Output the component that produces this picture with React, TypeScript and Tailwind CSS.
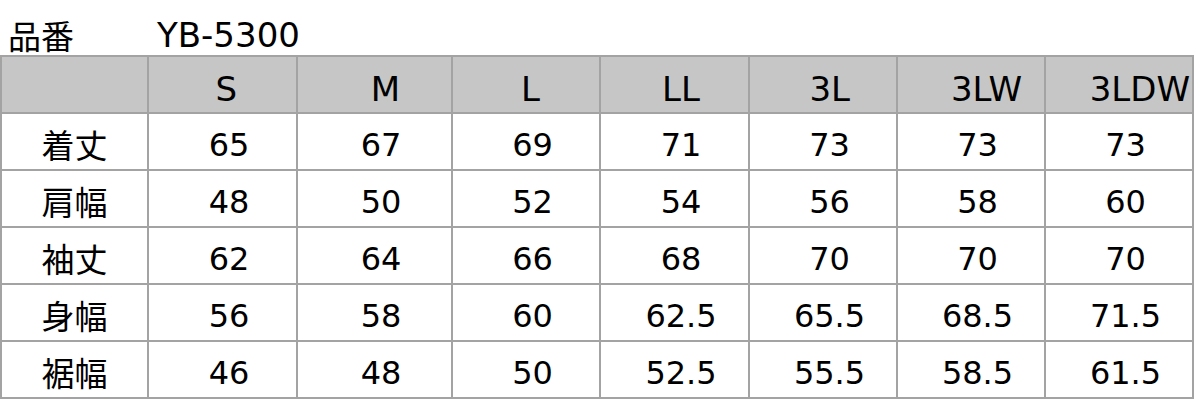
const sizes = [
  { label: "S", pr: "pr-[59px]" },
  { label: "M", pr: "pr-[51px]" },
  { label: "L", pr: "pr-[59px]" },
  { label: "LL", pr: "pr-[48px]" },
  { label: "3L", pr: "pr-[46px]" },
  { label: "3LW", pr: "pr-[22px]" },
  { label: "3LDW", pr: "pr-[2px]" },
];

const rows: { name: string; values: string[] }[] = [
  { name: "着丈", values: ["65", "67", "69", "71", "73", "73", "73"] },
  { name: "肩幅", values: ["48", "50", "52", "54", "56", "58", "60"] },
  { name: "袖丈", values: ["62", "64", "66", "68", "70", "70", "70"] },
  { name: "身幅", values: ["56", "58", "60", "62.5", "65.5", "68.5", "71.5"] },
  { name: "裾幅", values: ["46", "48", "50", "52.5", "55.5", "58.5", "61.5"] },
];

const font = { fontFamily: '"DejaVu Sans", "Noto Sans CJK JP", sans-serif' };
const jp = { fontFamily: '"Noto Sans CJK JP", sans-serif' };

export default function App() {
  return (
    <div className="w-[1200px] h-[401px] bg-white text-black overflow-hidden" style={font}>
      {/* title */}
      <div className="h-[55px] flex items-end pb-[3px]">
        <span className="pl-[8px] w-[157px] text-[33px] leading-none" style={jp}>
          品番
        </span>
        <span className="text-[34px] leading-none">YB-5300</span>
      </div>

      {/* size table */}
      <div className="w-[1194px] grid grid-cols-[145px_147px_153px_146px_147px_146px_146px_146px] auto-rows-[55px] gap-[2px] p-[2px] bg-[#a3a3a3]">
        <div className="bg-[#c6c6c6]" />
        {sizes.map((s) => (
          <div key={s.label} className={`bg-[#c6c6c6] flex justify-end items-end pb-[6px] text-[34px] leading-none ${s.pr}`}>
            {s.label}
          </div>
        ))}

        {rows.map((r) => (
          <>
            <div key={r.name} className="bg-white flex items-center justify-center pt-[5px] text-[33px] leading-none" style={jp}>
              {r.name}
            </div>
            {r.values.map((v, i) => (
              <div key={r.name + i} className="bg-white flex items-center justify-center pl-[13px] pt-[6px] text-[32px] leading-none">
                {v}
              </div>
            ))}
          </>
        ))}
      </div>
    </div>
  );
}
